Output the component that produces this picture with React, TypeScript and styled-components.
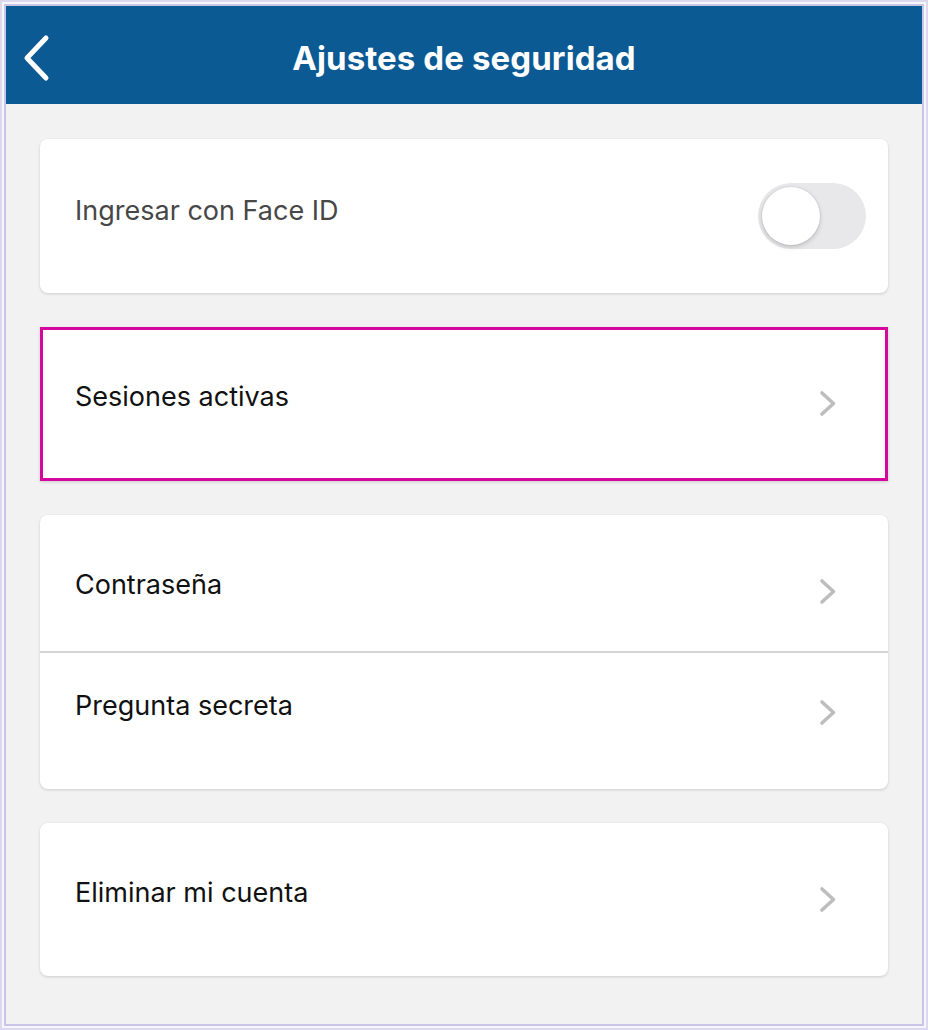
import styled, { createGlobalStyle } from 'styled-components';

const GlobalStyle = createGlobalStyle`
    html, body {
        margin: 0;
        padding: 0;
        background: #ffffff;
    }
    body {
        font-family: Inter, "Noto Sans", sans-serif;
    }
`;

const Frame = styled.div`
    box-sizing: border-box;
    width: 928px;
    height: 1030px;
    border: 2px solid #dcd9ef;
    padding: 2px;
    background: #f6f6fb;
`;

const Screen = styled.div`
    box-sizing: border-box;
    height: 100%;
    border: 2px solid #c9c5e6;
    background: #f2f2f2;
    display: flex;
    flex-direction: column;
`;

const NavBar = styled.header`
    height: 98px;
    background: #0b5a94;
    display: grid;
    grid-template-columns: 80px 1fr 80px;
    align-items: center;
`;

const BackButton = styled.button`
    border: 0;
    background: none;
    padding: 6px 0 0 15px;
    height: 100%;
    display: flex;
    align-items: center;
    cursor: pointer;
`;

const Title = styled.h1`
    margin: 0;
    text-align: center;
    color: #ffffff;
    font-size: 33px;
    font-weight: 700;
    letter-spacing: 0.1px;
    padding-top: 6px;
`;

const Content = styled.main`
    padding: 35px 34px 0 34px;
    display: flex;
    flex-direction: column;
    gap: 34px;
`;

const Card = styled.section<{ $highlight?: boolean }>`
    background: #ffffff;
    border-radius: 8px;
    box-shadow: 0 1px 3px rgba(0, 0, 0, 0.16);
    overflow: hidden;
    ${p => p.$highlight && `
        border-radius: 0;
        outline: 3px solid #d4089f;
        outline-offset: -3px;
    `}
`;

const ToggleRow = styled.div`
    box-sizing: border-box;
    height: 154px;
    display: flex;
    align-items: center;
    justify-content: space-between;
    padding: 0 22px 0 35px;
`;

const Row = styled.div<{ $height: number; $top: number; $divider?: boolean }>`
    box-sizing: border-box;
    height: ${p => p.$height}px;
    display: flex;
    align-items: flex-start;
    justify-content: space-between;
    padding: ${p => p.$top}px 51px 0 35px;
    border-top: ${p => (p.$divider ? '2px solid #d5d5d5' : 'none')};
`;

const Label = styled.span<{ $muted?: boolean }>`
    font-size: 27px;
    line-height: 36px;
    color: ${p => (p.$muted ? '#474747' : '#111111')};
`;

const ToggleLabel = styled(Label)`
    margin-bottom: 10px;
`;

const Chevron = styled.span`
    height: 36px;
    display: flex;
    align-items: center;
    margin-top: 6px;
`;

const Toggle = styled.div`
    width: 108px;
    height: 66px;
    border-radius: 33px;
    background: #e8e8ea;
    position: relative;
`;

const Knob = styled.span`
    position: absolute;
    left: 4px;
    top: 4px;
    width: 58px;
    height: 58px;
    border-radius: 50%;
    background: #ffffff;
    box-shadow: 0 2px 5px rgba(0, 0, 0, 0.18), 0 0 0 1px rgba(0, 0, 0, 0.04);
`;

const ChevronIcon = () => (
    <svg width="18" height="27" viewBox="0 0 18 27">
        <path d="M3 3 L14.5 13.5 L3 24" fill="none" stroke="#bdbdbd" strokeWidth="3.6" strokeLinecap="round" strokeLinejoin="round" />
    </svg>
);

type Item = { label: string; height: number; top: number };

const groups: Item[][] = [
    [{ label: 'Sesiones activas', height: 154, top: 52 }],
    [
        { label: 'Contraseña', height: 136, top: 52 },
        { label: 'Pregunta secreta', height: 138, top: 35 }
    ],
    [{ label: 'Eliminar mi cuenta', height: 153, top: 52 }]
];

export default function App() {
    return (
        <Frame>
            <GlobalStyle />
            <Screen>
                <NavBar>
                    <BackButton aria-label="Volver">
                        <svg width="30" height="48" viewBox="0 0 30 48">
                            <path d="M25 4 L6 24 L25 44" fill="none" stroke="#ffffff" strokeWidth="5" strokeLinecap="round" strokeLinejoin="round" />
                        </svg>
                    </BackButton>
                    <Title>Ajustes de seguridad</Title>
                    <span />
                </NavBar>
                <Content>
                    <Card>
                        <ToggleRow>
                            <ToggleLabel $muted>Ingresar con Face ID</ToggleLabel>
                            <Toggle>
                                <Knob />
                            </Toggle>
                        </ToggleRow>
                    </Card>
                    {groups.map((items, gi) => (
                        <Card key={gi} $highlight={gi === 0}>
                            {items.map((item, i) => (
                                <Row key={item.label} $height={item.height} $top={item.top} $divider={i > 0}>
                                    <Label>{item.label}</Label>
                                    <Chevron><ChevronIcon /></Chevron>
                                </Row>
                            ))}
                        </Card>
                    ))}
                </Content>
            </Screen>
        </Frame>
    );
}
